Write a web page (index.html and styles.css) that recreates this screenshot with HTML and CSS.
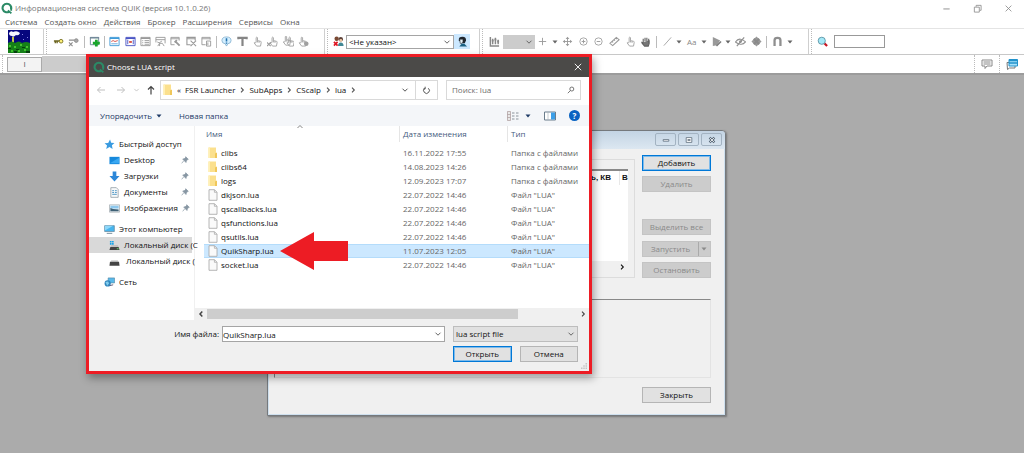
FILE: index.html
```html
<!DOCTYPE html>
<html lang="ru">
<head>
    <meta charset="UTF-8">
    <meta name="viewport" content="width=device-width, initial-scale=1.0">
    <title>Информационная система QUIK</title>
    <link rel="stylesheet" href="styles.css">
</head>
<body>

    <!-- shared icons -->
    <svg class="defs" width="0" height="0">
        <symbol id="logo" viewBox="0 0 12 12"><path d="M8.2 9.6A4.3 4.3 0 1 1 10 7.2" fill="none" stroke="#2b8a66" stroke-width="2.1"/><path d="M10.2 4.2v4.6M6.8 8.6l3.6 2.6" stroke="#2b8a66" stroke-width="1.8"/></symbol>
        <symbol id="chev" viewBox="0 0 8 8"><path d="M1.5 2.7L4 5.2l2.500-2.500" fill="none" stroke="currentColor"/></symbol>
        <symbol id="right" viewBox="0 0 8 8"><path d="M3 1.700L5.300 4 3 6.300" fill="none" stroke="currentColor" stroke-width="1.100"/></symbol>
        <symbol id="left" viewBox="0 0 8 8"><path d="M5.300 1.500L3 4l2.300 2.500" fill="none" stroke="currentColor" stroke-width="1.500"/></symbol>
        <symbol id="caret" viewBox="0 0 6 6"><path d="M.5 1.500h5L3 4.500z" fill="currentColor"/></symbol>
        <symbol id="close" viewBox="0 0 10 10"><path d="M1.800 1.800l6.400 6.400M8.200 1.800L1.800 8.200" fill="none" stroke="currentColor" stroke-width=".9"/></symbol>
        <symbol id="folder" viewBox="0 0 10 12"><path d="M.5.5h7.500V11H.5z" fill="#fbe08e"/><path d="M.5.5H2V11H.5z" fill="#fff0b5"/><path d="M7 6.500l2-1V11H7z" fill="#f0c75a"/></symbol>
        <symbol id="file" viewBox="0 0 10 12"><path d="M1 .7h5.500L9 3.200v8.100H1z" fill="#fafafa" stroke="#a3a3a3" stroke-width=".8"/><path d="M6.400.8v2.500h2.500" fill="none" stroke="#a3a3a3" stroke-width=".7"/></symbol>
        <symbol id="pin" viewBox="0 0 8 8"><path d="M4.700.7l2.600 2.600-1 .4-1 1.300-.3 1.500L1.700 3l1.500-.2L4.500 1.600zM3 4.500L.7 7.300" fill="#8796a3" stroke="#8796a3" stroke-width=".7"/></symbol>
        <symbol id="hand" viewBox="0 0 12 12"><path d="M4.500 7V1.800q.8-1.300 1.500 0V5l3.500.8q.8.4.5 1.500L9.300 11H5L2.300 7.500q.6-.8 1.500-.2zM6 5v2M7.700 5.500v2" fill="none" stroke="currentColor" stroke-width=".9"/></symbol>
        <symbol id="win" viewBox="0 0 12 12"><path d="M1 1.500h10v9H1z" fill="#fff" stroke="currentColor"/><path d="M1 2.500h10" stroke="currentColor" stroke-width="1.500"/></symbol>
    </svg>

    <header class="titlebar">
        <svg class="logo"><use href="#logo"/></svg>
        <span>Информационная система QUIK (версия 10.1.0.26)</span>
        <div class="winbtns">
            <button aria-label="Свернуть"><svg viewBox="0 0 10 10"><path d="M1.500 5.500h7" stroke="currentColor"/></svg></button>
            <button aria-label="Развернуть"><svg viewBox="0 0 10 10"><path d="M1.500 3.500h5.500V9H1.500zM3.500 3V1.500H9V7H7.500" fill="none" stroke="currentColor" stroke-width=".9"/></svg></button>
            <button aria-label="Закрыть окно"><svg><use href="#close"/></svg></button>
        </div>
    </header>

    <nav class="menu">
        <a href="#">Система</a>
        <a href="#">Создать окно</a>
        <a href="#">Действия</a>
        <a href="#">Брокер</a>
        <a href="#">Расширения</a>
        <a href="#">Сервисы</a>
        <a href="#">Окна</a>
    </nav>

    <div class="toolbar">
        <div class="group g-pic">
            <svg class="scene" viewBox="0 0 22 23"><path d="M0 0h22v23H0z" fill="#06067e"/><path d="M1 3q2-3 4-1 4-2 7 1-1 3-4 2-3 3-4 1-3 0-3-3z" fill="#f4f4ff"/><path d="M4 7h2v6H4z" fill="#c6c64a"/><path d="M0 13q4-3 7 0 4-3 7 0 4-2 8 0v10H0z" fill="#157f18"/><path d="M1 15h2v2H1zm5 1h2v2H6zm6-2h2v2h-2zm6 2h2v2h-2zM3 20h2v2H3zm7 0h2v2h-2zm6-1h2v2h-2z" fill="#42c52e"/><path d="M0 18h3v1H0zm8 1h3v1H8zm6-2h3v1h-3zm4 4h4v2h-4zM6 21h3v2H6z" fill="#06400c"/><path d="M14 4h1v1h-1zm5 3h1v1h-1zm-4 2h1v1h-1z" fill="#8080e0"/></svg>
        </div>
        <div class="group g-main">
            <button aria-label="Подключить"><svg viewBox="0 0 12 12"><path d="M1 5.500h6M2.500 6v2M4.500 6v2" stroke="#6b6420" stroke-width="1.500"/><circle cx="8.800" cy="5.700" r="2" fill="#fff27a" stroke="#77701f"/></svg></button>
            <button aria-label="Отключить"><svg viewBox="0 0 12 12"><path d="M1 4.500h6M1 7l4 4M5 7l-4 4" stroke="#8c8c8c" stroke-width="1.200"/><circle cx="9" cy="5" r="2" fill="#a8a8a8" stroke="#8c8c8c"/></svg></button>
            <i class="sep"></i>
            <button aria-label="Новое окно"><svg viewBox="0 0 12 12"><path d="M1.500 1.500h9v8h-9z" fill="#fff" stroke="#6f8797"/><path d="M1 2h10" stroke="#6f8797" stroke-width="1.500"/><path d="M8 4v7.500M4.200 7.700h7.600" stroke="#19a52b" stroke-width="3"/></svg></button>
            <i class="sep"></i>
            <button class="blue" aria-label="Таблица"><svg viewBox="0 0 12 12"><use href="#win"/><path d="M2.500 6l2-1 2 1 3-1" fill="none" stroke="#d64d43"/><path d="M2.500 8.500h7" stroke="#67a6dc"/></svg></button>
            <button class="navy" aria-label="График"><svg viewBox="0 0 12 12"><use href="#win"/><path d="M3 4v5M9 4v5" stroke="#4953c8"/><path d="M4.500 6.500h3" stroke="#d64d43" stroke-width="2"/></svg></button>
            <button aria-label="Список"><svg viewBox="0 0 12 12"><use href="#win"/><path d="M5 5h5M5 7h5M5 9h5M2.500 5h1M2.500 7h1M2.500 9h1" stroke="currentColor"/></svg></button>
            <button aria-label="Диаграмма"><svg viewBox="0 0 12 12"><path d="M1 7V1.500h10V8M1 4h10M2.500 6.500l2 1 3-2M3 11l2-3h3l2 3M5 8v3" fill="none" stroke="currentColor"/></svg></button>
            <button aria-label="Настройка"><svg viewBox="0 0 12 12"><path d="M5 9.500H1v-8h9V5M1 3h9" fill="none" stroke="currentColor"/><path d="M5.500 5.500l5 5M5 7l2.500-2.500" stroke="currentColor" stroke-width="2"/></svg></button>
            <button aria-label="Удалить таблицу"><svg viewBox="0 0 12 12"><path d="M5 9.500H1v-8h9V5M1 3h9M5 5l6 6M11 5l-6 6" fill="none" stroke="currentColor" stroke-width="1.200"/></svg></button>
            <button aria-label="Обновить"><svg viewBox="0 0 12 12"><path d="M5 9.500H1v-8h9V4M1 3h9M6 5.500h4.500V11H6zM7.500 7v3" fill="none" stroke="currentColor"/></svg></button>
            <i class="sep"></i>
            <button aria-label="Сообщение"><svg viewBox="0 0 12 12"><path d="M6 1q5 0 5 4 0 3-3.500 3.500L6 11 4.500 8.500Q1 8 1 5q0-4 5-4z" fill="#d4efff" stroke="#7aa8ca" stroke-width=".8"/><path d="M6 2.500v3.500M6 7v1.500" stroke="#2271ad" stroke-width="1.700"/></svg></button>
            <button aria-label="Текст"><svg viewBox="0 0 12 12"><path d="M1.500 3.500V2h9v1.500M6 2v9" fill="none" stroke="#858585" stroke-width="2.400"/></svg></button>
            <button aria-label="Купить"><svg><use href="#hand"/></svg></button>
            <button aria-label="Снять заявку"><svg viewBox="0 0 12 12"><use href="#hand" x="1"/><path d="M0 7l4 4M4 7l-4 4" stroke="currentColor" stroke-width="1.200"/></svg></button>
            <button aria-label="Снять все"><svg viewBox="0 0 12 12"><use href="#hand" x="-2" y="-1"/><use href="#hand" x="2"/></svg></button>
            <button aria-label="Стоп-заявка"><svg viewBox="0 0 12 12"><use href="#hand" x="-1"/><circle cx="9" cy="8.500" r="2.500" fill="#a0a0a0"/></svg></button>
        </div>
        <div class="group g-user">
            <svg class="ico" viewBox="0 0 12 12"><circle cx="4" cy="3" r="2.400" fill="#7a4a34"/><circle cx="8.500" cy="3.500" r="2.400" fill="#5b4038"/><circle cx="8.500" cy="4.800" r="1.600" fill="#efc8a5"/><path d="M5.500 11q0-4 3-4t3 4z" fill="#418794"/><path d="M1 6.500l4 4M5 6.500l-4 4" stroke="#e01522" stroke-width="1.800"/></svg>
            <span class="combo client">
                <select aria-label="Клиент"><option>&lt;Не указан&gt;</option></select>
                <svg><use href="#chev"/></svg>
            </span>
            <button class="active" aria-label="Профиль"><svg viewBox="0 0 12 12"><path d="M2 4.500Q1.500.700 6 .700q4.300 0 3.800 4.300L8.500 8H5z" fill="#20272e"/><path d="M3 3.500h3.500v3L5.500 8H3.500z" fill="#e7f2f7" stroke="#20272e" stroke-width=".6"/><path d="M2.500 11.500L5 8.500h3l3 3z" fill="#186082"/></svg></button>
        </div>
        <div class="group g-draw">
            <button aria-label="Тип графика"><svg viewBox="0 0 12 12"><path d="M1.500 1v10H11M4 3v6M7 2v7M10 4v5" fill="none" stroke="#888" stroke-width="1.600"/><path d="M3 5h2M6 4h2M9 6h2" stroke="#888" stroke-width="2"/></svg></button>
            <span class="combo off">
                <select aria-label="Интервал" disabled><option></option></select>
                <svg><use href="#chev"/></svg>
            </span>
            <button aria-label="Курсор"><svg viewBox="0 0 12 12"><path d="M6 2v8M2 6h8" stroke="currentColor"/></svg></button>
            <svg class="caret"><use href="#caret"/></svg>
            <button aria-label="Переместить"><svg viewBox="0 0 12 12"><path d="M6 2v8M2 6h8" stroke="currentColor"/><path d="M6 .8L8 3.300H4zM6 11.200L8 8.700H4zM.8 6L3.300 4v4zM11.200 6L8.700 4v4z" fill="currentColor"/></svg></button>
            <button aria-label="Увеличить"><svg viewBox="0 0 12 12"><circle cx="6" cy="6" r="4" fill="none" stroke="currentColor" stroke-width=".9"/><path d="M6 4v4M4 6h4" stroke="currentColor"/></svg></button>
            <button aria-label="Уменьшить"><svg viewBox="0 0 12 12"><circle cx="6" cy="6" r="4" fill="none" stroke="currentColor" stroke-width=".9"/><path d="M4 6h4" stroke="currentColor"/></svg></button>
            <button aria-label="Линейка"><svg viewBox="0 0 12 12"><path d="M1 8l7-6.500L11 4l-7 6.500zM3.500 6l1 1M5.500 4l1 1M7.500 2.500l1 1" fill="none" stroke="currentColor" stroke-width="1.200"/></svg></button>
            <button aria-label="Указать"><svg><use href="#hand"/></svg></button>
            <button aria-label="Рука"><svg viewBox="0 0 12 12"><path d="M3.500 8V3M5.500 6V1.800M7.500 6V1.800M9.500 7V3M3.500 8L1.500 6.500M10 4.500V8l-1 3H5L2 7.500" fill="#777" stroke="#606060" stroke-width="1.200"/></svg></button>
            <i class="sep"></i>
            <button aria-label="Линия"><svg viewBox="0 0 12 12"><path d="M2 10.500l8-9" stroke="currentColor" stroke-width=".9"/></svg></button>
            <svg class="caret"><use href="#caret"/></svg>
            <button class="aa">Aa</button>
            <svg class="caret"><use href="#caret"/></svg>
            <button aria-label="Фигура"><svg viewBox="0 0 12 12"><path d="M2 1l8 4-3.500 5L2 11z" fill="#999"/><path d="M6 11l5-5" stroke="#777" stroke-width="1.500"/></svg></button>
            <svg class="caret"><use href="#caret"/></svg>
            <button aria-label="Скрыть"><svg viewBox="0 0 12 12"><path d="M.5 6.500Q3 3 6 3.500t5.500 3Q9 9.500 6 9T.5 6.500z" fill="none" stroke="#909090" stroke-width="1.200"/><circle cx="6" cy="6" r="1.500" fill="#888"/><path d="M2 11l8-9.500" stroke="#909090" stroke-width="1.300"/></svg></button>
            <button aria-label="Стереть"><svg viewBox="0 0 12 12"><path d="M6 .5L11.500 6 6 11.500.5 6z" fill="#999"/><path d="M3 3l6 6M3 9l6-6" stroke="#8a8a8a" stroke-width="2"/></svg></button>
            <i class="sep"></i>
            <button aria-label="Магнит"><svg viewBox="0 0 12 12"><path d="M2.800 11V4.500q0-2.500 3.200-2.500t3.200 2.500V11" fill="none" stroke="#8f8f8f" stroke-width="2.500"/></svg></button>
            <svg class="caret"><use href="#caret"/></svg>
        </div>
        <div class="group g-find">
            <svg class="ico" viewBox="0 0 12 12"><path d="M8 8l3 3" stroke="#c91420" stroke-width="2.400"/><circle cx="5.200" cy="5.200" r="3.900" fill="#a5e9f8" stroke="#5c95a5"/></svg>
            <input type="text" aria-label="Поиск инструмента">
        </div>
    </div>

    <div class="tabs">
        <button class="tab">I</button>
        <div class="tabfill"></div>
        <button class="tabico" aria-label="Сообщения"><svg viewBox="0 0 12 12"><path d="M1 2h10v6H6l-2 2.500V8H1z" fill="#fff" stroke="#888"/><path d="M2.500 4h7M2.500 6h7" stroke="#888"/></svg></button>
        <button class="tabico" aria-label="Окна сообщений"><svg viewBox="0 0 12 12"><path d="M1 4.500h8v5.500H3.500L1.500 11.500z" fill="#fff" stroke="#777"/><path d="M3 1.500h8.500V8H3z" fill="#a9e2fa" stroke="#2393cc"/><path d="M3 2.500h8.500M3 5h8.500" stroke="#2393cc" stroke-width="1.300"/></svg></button>
    </div>

    <main class="desktop"></main>

    <!-- scripts window -->
    <section class="scripts">
        <div class="caption">
            <button aria-label="Свернуть"><svg viewBox="0 0 10 10"><path d="M1.500 4.500h7v2h-7z" fill="#fff" stroke="currentColor"/></svg></button>
            <button aria-label="Развернуть"><svg viewBox="0 0 10 10"><path d="M1.500 2h7v6h-7zM3.500 4.500h3v1h-3z" fill="#fff" stroke="currentColor"/></svg></button>
            <button aria-label="Закрыть"><svg viewBox="0 0 10 10"><path d="M2 2l6 6M8 2L2 8" stroke="currentColor" stroke-width="3"/><path d="M2.500 2.500l5 5M7.500 2.500l-5 5" stroke="#fff"/></svg></button>
        </div>
        <div class="scripts-body">
            <div class="frame">
                <div class="running">
                    <div class="running-head"><b>ь, КВ</b><b class="last">В</b></div>
                    <div class="running-scroll"><svg><use href="#right"/></svg></div>
                </div>
            </div>
            <div class="side-btns">
                <button class="btn primary">Добавить</button>
                <button class="btn" disabled>Удалить</button>
                <button class="btn all" disabled>Выделить все</button>
                <button class="btn split" disabled><span>Запустить</span><svg><use href="#caret"/></svg></button>
                <button class="btn" disabled>Остановить</button>
            </div>
        </div>
        <div class="errors"></div>
        <div class="scripts-foot"><button class="btn">Закрыть</button></div>
    </section>

    <!-- open file dialog -->
    <section class="dialog">
        <div class="dlg-title">
            <svg class="logo"><use href="#logo"/></svg>
            <span>Choose LUA script</span>
            <button aria-label="Закрыть"><svg><use href="#close"/></svg></button>
        </div>

        <div class="dlg-nav">
            <button class="dim" aria-label="Назад"><svg viewBox="0 0 10 10"><path d="M9 5H1.500M4.500 2l-3 3 3 3" fill="none" stroke="currentColor"/></svg></button>
            <button class="dim" aria-label="Вперёд"><svg viewBox="0 0 10 10"><path d="M1 5h7.500M5.500 2l3 3-3 3" fill="none" stroke="currentColor"/></svg></button>
            <button class="dim small" aria-label="Журнал"><svg><use href="#chev"/></svg></button>
            <button class="up" aria-label="Вверх"><svg viewBox="0 0 10 10"><path d="M5 9.500V1.500M2 4.500l3-3 3 3" fill="none" stroke="currentColor" stroke-width="1.200"/></svg></button>
            <div class="path">
                <svg class="fold"><use href="#folder"/></svg>
                <span class="more">«</span>
                <a href="#">FSR Launcher</a><svg><use href="#right"/></svg>
                <a href="#">SubApps</a><svg><use href="#right"/></svg>
                <a href="#">CScalp</a><svg><use href="#right"/></svg>
                <a href="#">lua</a><svg><use href="#right"/></svg>
                <button class="drop" aria-label="Предыдущие папки"><svg><use href="#chev"/></svg></button>
                <button class="reload" aria-label="Обновить"><svg viewBox="0 0 10 10"><path d="M3 2.500A3.200 3.200 0 1 0 7 2.500M3.500.8v2.500H1.500" fill="none" stroke="currentColor" stroke-width="1.100"/></svg></button>
            </div>
            <div class="search">
                <input type="text" placeholder="Поиск: lua" aria-label="Поиск">
                <svg viewBox="0 0 10 10"><circle cx="6" cy="3.800" r="2.500" fill="none" stroke="currentColor"/><path d="M4.300 5.700L1 9" stroke="currentColor"/></svg>
            </div>
        </div>

        <div class="dlg-tools">
            <button>Упорядочить <svg class="caret"><use href="#caret"/></svg></button>
            <button class="newf">Новая папка</button>
            <button class="view" aria-label="Вид"><svg viewBox="0 0 12 10"><path d="M.5.500h3v9h-3zM.5 3.500h3M.5 6.500h3" fill="#e8e8e8" stroke="#a99" stroke-width=".7"/><path d="M5 2h2.500M5 5h2.500M5 8h2.500M9 2h2.500M9 5h2.500M9 8h2.500" stroke="#8a929a"/></svg><svg class="caret"><use href="#caret"/></svg></button>
            <button class="pane" aria-label="Область просмотра"><svg viewBox="0 0 12 10"><path d="M.5 1h11v8H.5z" fill="#fff" stroke="#6b7d8c"/><path d="M7 1.500h4v7H7z" fill="#3c9fe8"/><path d="M4 1v8" stroke="#a9b4bc" stroke-width=".7"/></svg></button>
            <button class="help" aria-label="Справка">?</button>
        </div>

        <div class="dlg-body">
            <ul class="tree">
                <li class="root"><svg viewBox="0 0 10 10"><path d="M5.500.5l1 3 3 .2-2.300 2 .6 3.300L5 7.300 2 9.200l.8-3.300L.5 3.800l3.300-.2z" fill="#3a9be0"/></svg>Быстрый доступ</li>
                <li><svg viewBox="0 0 12 10"><path d="M.5 1h11v8H.5z" fill="#1789dc"/><path d="M1 8l10-6v6z" fill="#39a8f2"/></svg>Desktop<svg class="pin"><use href="#pin"/></svg></li>
                <li><svg viewBox="0 0 12 12"><path d="M4 .5h4v5h3.500L6 11.500.5 5.500H4z" fill="#2c87d8"/></svg>Загрузки<svg class="pin"><use href="#pin"/></svg></li>
                <li><svg viewBox="0 0 12 12"><path d="M2 .7h6l2 2v8.600H2z" fill="#f7f9fa" stroke="#8b969e" stroke-width=".8"/><path d="M3.500 4h2M6.500 4h2M3.500 6h2M6.500 6h2M3.500 8h5" stroke="#4a94c4"/></svg>Документы<svg class="pin"><use href="#pin"/></svg></li>
                <li><svg viewBox="0 0 12 10"><path d="M.5 1h11v8H.5z" fill="#eef3f6" stroke="#a3abb0" stroke-width=".8"/><path d="M1.500 2h9v3h-9z" fill="#8dc8ee"/><path d="M1.500 8V4.500l3 1 6 .5v2z" fill="#3e6075"/></svg>Изображения<svg class="pin"><use href="#pin"/></svg></li>
                <li class="root gap"><svg viewBox="0 0 12 10"><path d="M.7.8h10.600v6.400H.7z" fill="#47b5ee" stroke="#5c7f94" stroke-width=".7"/><path d="M1 1h9L1 6z" fill="#8ed8fa"/><path d="M3 9.200h6" stroke="#6e8797"/></svg>Этот компьютер</li>
                <li class="on"><svg viewBox="0 0 12 12"><path d="M1 1h1.800v1.800H1zm2.300 0h1.800v1.800H3.300zM1 3.300h1.800v1.800H1zm2.300 0h1.800v1.800H3.300z" fill="#17a2e8"/><path d="M1.500 7.500h9l1 3.500h-11z" fill="#444"/><path d="M1.500 7l1-1h7l1 1z" fill="#aaa"/><path d="M8.500 9.500h2" stroke="#5fe36c"/></svg>Локальный диск (С</li>
                <li class="wide"><svg viewBox="0 0 12 12"><path d="M1 6.500h10l.500 4H.5z" fill="#444"/><path d="M1 6.500l1.500-1.500h7L11 6.500z" fill="#b5b5b5"/></svg>Локальный диск (</li>
                <li class="root gap"><svg viewBox="0 0 12 12"><path d="M4.500 1h7v5.500h-7z" fill="#58b9ea" stroke="#4d7c98" stroke-width=".6"/><circle cx="4" cy="7" r="3.400" fill="#3186bd"/><path d="M1.500 5.500l3-.5 1 2-2 2.500z" fill="#81cdee"/><path d="M6 9.500l4-1" stroke="#557"/></svg>Сеть</li>
            </ul>

            <div class="files">
                <svg class="sort" viewBox="0 0 8 6"><path d="M1.500 4L4 1.500 6.500 4" fill="none" stroke="currentColor" stroke-width=".9"/></svg>
                <table>
                    <thead>
                        <tr><th class="c-name">Имя</th><th class="c-date">Дата изменения</th><th>Тип</th></tr>
                    </thead>
                    <tbody>
                        <tr><td><svg><use href="#folder"/></svg>clibs</td><td>16.11.2022 17:55</td><td>Папка с файлами</td></tr>
                        <tr><td><svg><use href="#folder"/></svg>clibs64</td><td>14.08.2023 14:26</td><td>Папка с файлами</td></tr>
                        <tr><td><svg><use href="#folder"/></svg>logs</td><td>12.09.2023 17:07</td><td>Папка с файлами</td></tr>
                        <tr><td><svg><use href="#file"/></svg>dkjson.lua</td><td>22.07.2022 14:46</td><td>Файл "LUA"</td></tr>
                        <tr><td><svg><use href="#file"/></svg>qscallbacks.lua</td><td>22.07.2022 14:46</td><td>Файл "LUA"</td></tr>
                        <tr><td><svg><use href="#file"/></svg>qsfunctions.lua</td><td>22.07.2022 14:46</td><td>Файл "LUA"</td></tr>
                        <tr><td><svg><use href="#file"/></svg>qsutils.lua</td><td>22.07.2022 14:46</td><td>Файл "LUA"</td></tr>
                        <tr class="selected"><td><svg><use href="#file"/></svg>QuikSharp.lua<svg class="arrow" viewBox="0 0 68 38"><path d="M0 19L34 0v9h34v20H34v9z" fill="#ed1c24"/></svg></td><td>11.07.2023 12:05</td><td>Файл "LUA"</td></tr>
                        <tr><td><svg><use href="#file"/></svg>socket.lua</td><td>22.07.2022 14:46</td><td>Файл "LUA"</td></tr>
                    </tbody>
                </table>
                <div class="hscroll">
                    <button aria-label="Влево"><svg><use href="#left"/></svg></button>
                    <div class="track"><div class="thumb"></div></div>
                    <button aria-label="Вправо"><svg><use href="#right"/></svg></button>
                </div>
            </div>
        </div>

        <div class="dlg-foot">
            <label for="fname">Имя файла:</label>
            <span class="combo fname">
                <input type="text" id="fname" value="QuikSharp.lua">
                <svg><use href="#chev"/></svg>
            </span>
            <span class="combo ftype">
                <select aria-label="Тип файла"><option>lua script file</option></select>
                <svg><use href="#chev"/></svg>
            </span>
            <div class="actions">
                <button class="btn primary">Открыть</button>
                <button class="btn">Отмена</button>
            </div>
            <svg class="grip" viewBox="0 0 8 8"><path d="M6 0h2v2H6zM6 3h2v2H6zM6 6h2v2H6zM3 3h2v2H3zM3 6h2v2H3zM0 6h2v2H0z" fill="#c4c4c4"/></svg>
        </div>
    </section>

</body>
</html>
```

FILE: styles.css
```css
*{
    box-sizing: border-box;
}

body{
    display: flex;
    flex-direction: column;
    position: relative;
    min-height: 100vh;
    margin: 0;
    background: #fff;
    color: #111;
    font-family: 'Open Sans', 'Noto Sans', sans-serif;
    font-size: 8px;
    line-height: 12px;
}

button, input, select{
    margin: 0;
    padding: 0;
    border: none;
    background: none;
    color: inherit;
    font: inherit;
    outline: none;
}

a{
    color: inherit;
    text-decoration: none;
}

svg{
    display: block;
    flex: none;
    width: 8px;
    height: 8px;
}

.defs{
    position: absolute;
}

/* main window */

.titlebar{
    display: flex;
    align-items: center;
    height: 16px;
    padding-left: 1px;
    color: #777;
}
.logo{
    width: 12px;
    height: 12px;
    margin-right: 2px;
}
.winbtns{
    display: flex;
    margin-left: auto;
}
.winbtns button{
    display: flex;
    justify-content: center;
    width: 31px;
    color: #888;
}
.winbtns svg{
    width: 9px;
    height: 9px;
}

.menu{
    display: flex;
    gap: 7px;
    height: 12px;
    padding-left: 5px;
    color: #555;
}

.toolbar{
    display: flex;
    height: 27px;
    border-top: 1px solid #e4e4e4;
    border-bottom: 1px solid #c8c8c8;
}
.group{
    display: flex;
    align-items: center;
    justify-content: space-between;
    flex: none;
    border-right: 1px solid #cfcfcf;
    color: #999;
}
.group + .group{
    margin-left: 2px;
    border-left: 1px dotted #bbb;
}
.g-pic{
    width: 44px;
    padding-left: 8px;
}
.scene{
    width: 22px;
    height: 23px;
}
.g-main{
    width: 279px;
    padding: 0 13px 0 4px;
}
.g-user{
    width: 153px;
    padding: 0 9px 0 5px;
}
.g-draw{
    width: 327px;
    padding: 0 14px 0 4px;
}
.group.g-find{
    justify-content: flex-start;
    gap: 6px;
    flex: 1;
    padding-left: 5px;
    border-right: none;
}
.group button{
    display: flex;
    justify-content: center;
    width: 15px;
}
.group button svg, .ico{
    width: 11px;
    height: 11px;
}
.group .active{
    align-items: center;
    width: 16px;
    height: 15px;
    background: #cce8ff;
}
.group .blue{
    color: #3f9ad8;
}
.group .navy{
    color: #4a55c4;
}
.group .aa{
    color: #888;
}
.sep{
    width: 1px;
    height: 12px;
    margin: 0 2px;
    background: #bbb;
}
.caret{
    width: 6px;
    height: 6px;
    color: #666;
}
.group .caret{
    margin: 0 1px;
}
.g-find input{
    width: 51px;
    height: 13px;
    border: 1px solid #999;
}

.combo{
    display: flex;
    align-items: center;
    position: relative;
    border: 1px solid #a5a5a5;
    background: #fff;
    color: #111;
}
.combo select, .combo input{
    flex: 1;
    width: 100%;
    height: 100%;
    padding: 0 14px 0 2px;
    appearance: none;
}
.combo input{
    padding-left: 0;
}
.combo svg{
    position: absolute;
    right: 2px;
    color: #666;
    pointer-events: none;
}
.client{
    width: 108px;
    height: 14px;
    margin-left: auto;
}
.group .off{
    width: 32px;
    height: 14px;
    border: none;
    background: #ccc;
}

.tabs{
    display: flex;
    align-items: center;
    height: 18px;
    margin-left: 2px;
    padding-left: 4px;
    border-left: 1px dotted #bbb;
}
.tab{
    width: 35px;
    height: 15px;
    border: 1px solid #aaa;
    background: #f3f3f3;
    color: #555;
}
.tabfill{
    width: 46%;
    height: 16px;
    background: #ccc;
}
.tabico{
    display: flex;
    align-items: center;
    justify-content: center;
    align-self: stretch;
    width: 25px;
    border-left: 1px dotted #bbb;
}
.tabfill + .tabico{
    margin-left: auto;
}
.tabico svg{
    width: 12px;
    height: 12px;
}

.desktop{
    flex: 1;
    border-top: 2px solid #9c9c9c;
    background: #ababab;
}

/* buttons used in both windows */

.btn{
    display: flex;
    align-items: center;
    justify-content: center;
    width: 100%;
    height: 16px;
    border: 1px solid #b5b5b5;
    background: #e1e1e1;
}
.btn:disabled{
    border-color: #c4c4c4;
    background: #ccc;
    color: #8a8a8a;
}
.primary{
    border: 1px solid #0078d7;
    box-shadow: inset 0 0 0 1px #7fbbea;
}

/* scripts window */

.scripts{
    position: absolute;
    top: 130px;
    left: 267px;
    right: 298px;
    padding-bottom: 12px;
    border: 1px solid #75797d;
    border-radius: 4px 4px 0 0;
    background: #f0f0f0;
    box-shadow: inset 0 0 0 1px #cfe0ee, 1px 1px 2px #777;
}
.caption{
    display: flex;
    justify-content: flex-end;
    gap: 2px;
    height: 18px;
    padding: 2px 3px;
    border-radius: 4px 4px 0 0;
    background: linear-gradient(#c3d4e4, #dce7f1);
}
.caption button{
    display: flex;
    align-items: center;
    justify-content: center;
    width: 21px;
    height: 13px;
    border: 1px solid #a3b3c2;
    border-radius: 2px;
    color: #5b6b7a;
}
.scripts-body{
    display: flex;
    gap: 7px;
    padding: 6px 14px 0 6px;
}
.frame{
    flex: 1;
    margin-top: 4px;
    padding: 9px 6px 4px;
    border: 1px solid #dcdcdc;
}
.running{
    display: flex;
    flex-direction: column;
    justify-content: space-between;
    height: 100%;
    border-top: 2px solid #888;
    background: #fff;
}
.running-head{
    display: flex;
    justify-content: flex-end;
    font-family: 'Liberation Sans', sans-serif;
    line-height: 14px;
}
.last{
    width: 9px;
    margin-left: 8px;
    padding-left: 2px;
    border-left: 1px solid #e8e8e8;
}
.running-scroll{
    display: flex;
    justify-content: flex-end;
    padding: 2px;
    background: #f0f0f0;
}
.side-btns{
    display: flex;
    flex-direction: column;
    gap: 5px;
    width: 69px;
}
.side-btns .all{
    margin-top: 22px;
}
.split{
    margin-top: 1px;
    padding-right: 2px;
}
.split span{
    flex: 1;
}
.split svg{
    width: 10px;
    height: 100%;
    padding: 0 1px 0 2px;
    border-left: 1px solid #aaa;
}
.errors{
    height: 79px;
    margin: 21px 14px 0 6px;
    border: 1px solid #e3e3e3;
    border-top: 1px solid #888;
    border-left-color: #888;
}
.scripts-foot{
    width: 69px;
    margin: 9px 14px 0 auto;
}

/* open file dialog */

.dialog{
    position: absolute;
    top: 54px;
    left: 86px;
    right: 432px;
    border: 3px solid #ed1c24;
    background: #fff;
    box-shadow: 2px 4px 8px rgba(0, 0, 0, 0.35);
}
.dlg-title{
    display: flex;
    align-items: center;
    height: 20px;
    padding: 0 6px 0 4px;
    background: #4b4a48;
    color: #fff;
}
.dlg-title button{
    margin-left: auto;
}
.dlg-title button svg{
    width: 10px;
    height: 10px;
}
.dlg-nav{
    display: flex;
    align-items: center;
    height: 28px;
    padding: 0 8px 2px 2px;
}
.dlg-nav > button{
    display: flex;
    justify-content: center;
    width: 20px;
    color: #444;
}
.dlg-nav > button svg{
    width: 10px;
    height: 10px;
}
.dlg-nav .dim{
    color: #c0c0c0;
}
.dlg-nav .small{
    width: 11px;
}
.dlg-nav .small svg{
    width: 7px;
}
.dlg-nav .up{
    width: 18px;
}
.path{
    display: flex;
    align-items: center;
    flex: 1;
    height: 20px;
    padding-left: 2px;
    border: 1px solid #d9d9d9;
}
.path .more{
    margin: 0 4px;
}
.path svg{
    color: #555;
}
.path > svg{
    margin: 0 3px;
}
.path > .fold{
    width: 10px;
    height: 12px;
    margin: 0;
}
.drop{
    margin-left: auto;
    padding: 0 6px;
}
.reload{
    display: flex;
    align-items: center;
    height: 100%;
    padding: 0 6px;
    border-left: 1px solid #d9d9d9;
}
.reload svg{
    width: 9px;
    height: 9px;
}
.search{
    display: flex;
    align-items: center;
    width: 135px;
    height: 20px;
    margin-left: 8px;
    padding: 0 5px;
    border: 1px solid #d9d9d9;
    color: #555;
}
.search input{
    flex: 1;
    min-width: 0;
}
.search input::placeholder{
    color: #6d6d6d;
}

.dlg-tools{
    display: flex;
    align-items: center;
    height: 21px;
    padding: 0 9px 0 11px;
    background: #f4f6f9;
    color: #1e3a66;
}
.dlg-tools button{
    display: flex;
    align-items: center;
    gap: 4px;
}
.dlg-tools .caret{
    color: #1e3a66;
}
.dlg-tools .newf{
    margin-left: 17px;
}
.dlg-tools .view{
    gap: 6px;
    margin-left: auto;
}
.view svg:first-child, .pane svg{
    width: 12px;
    height: 10px;
}
.pane{
    margin: 0 13px;
}
.dlg-tools .help{
    justify-content: center;
    width: 11px;
    height: 11px;
    border-radius: 50%;
    background: #0a63c2;
    color: #fff;
    font-weight: bold;
}

.dlg-body{
    display: flex;
    height: 194px;
}
.tree{
    width: 106px;
    margin: 0;
    padding: 10px 2px 0 0;
    border-right: 1px solid #f0f0f0;
    list-style: none;
}
.tree li{
    display: flex;
    align-items: center;
    gap: 4px;
    height: 16px;
    padding-left: 20px;
    white-space: nowrap;
}
.tree .root{
    padding-left: 15px;
}
.tree .wide{
    gap: 6px;
}
.tree .gap{
    margin-top: 5px;
}
.tree .on{
    background: #d9d9d9;
}
.tree svg{
    width: 11px;
    height: 11px;
}
.tree .pin{
    width: 8px;
    height: 8px;
    margin: 0 3px 0 auto;
}

.files{
    display: flex;
    flex-direction: column;
    position: relative;
    flex: 1;
    min-width: 0;
}
.sort{
    position: absolute;
    top: -2px;
    left: 101px;
    height: 6px;
    color: #777;
}
.files table{
    margin-left: 9px;
    border-collapse: separate;
    border-spacing: 0;
    table-layout: fixed;
}
.files th{
    height: 16px;
    padding: 0 0 0 3px;
    border-left: 1px solid #e5e5e5;
    color: #44597d;
    font-weight: normal;
    text-align: left;
}
.files .c-name{
    width: 195px;
    padding-left: 2px;
    border-left: none;
}
.c-date{
    width: 108px;
}
.files thead::after{
    content: '';
    display: block;
    height: 4px;
}
.files td{
    height: 14px;
    padding: 0 0 0 4px;
    color: #666;
    white-space: nowrap;
}
.files td:first-child{
    display: flex;
    align-items: center;
    gap: 3px;
    position: relative;
    color: #111;
}
.files td svg{
    width: 10px;
    height: 12px;
}
.selected td{
    background: #cce8ff;
    box-shadow: inset 0 1px #b4dcfb, inset 0 -1px #b4dcfb;
}
.files td .arrow{
    position: absolute;
    top: -12px;
    left: 76px;
    width: 68px;
    height: 38px;
    z-index: 1;
}
.hscroll{
    display: flex;
    align-items: center;
    height: 12px;
    margin-top: auto;
    background: #f0f0f0;
}
.hscroll button{
    width: 12px;
    padding: 0 2px;
    color: #444;
}
.track{
    flex: 1;
}
.thumb{
    width: 84%;
    height: 10px;
    background: #cdcdcd;
}

.dlg-foot{
    display: grid;
    grid-template-columns: 130px 1fr 125px;
    gap: 4px 0;
    position: relative;
    padding: 6px 11px 9px 0;
    background: #f0f0f0;
}
.dlg-foot label{
    align-self: center;
    text-align: right;
}
.fname{
    height: 16px;
    margin: 0 8px 0 3px;
}
.ftype{
    height: 16px;
    border-color: #bdbdbd;
    background: #e1e1e1;
}
.actions{
    display: flex;
    gap: 8px;
    grid-column: 3;
}
.grip{
    position: absolute;
    right: 2px;
    bottom: 2px;
    width: 6px;
    height: 6px;
}
```
